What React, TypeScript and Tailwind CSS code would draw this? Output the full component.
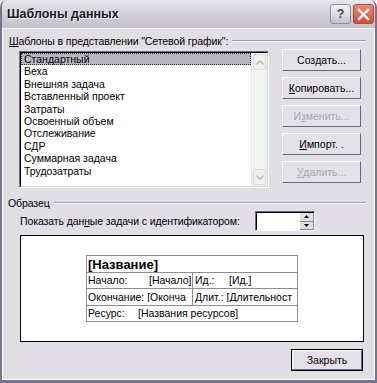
import React from "react";

const font = { fontFamily: '"Liberation Sans", Arial, sans-serif' };

function Btn({ children, disabled, def }: { children: React.ReactNode; disabled?: boolean; def?: boolean }) {
  return (
    <div
      className={
        "h-[22px] flex items-center justify-center text-[10.5px] leading-none " +
        (def ? "border border-black " : "") +
        (disabled ? "text-[#a7a5b0]" : "text-black")
      }
    >
      <div className="w-full h-full flex items-center justify-center border-t border-l border-t-white border-l-white border-r border-b border-r-[#6b6878] border-b-[#6b6878] bg-[#e4e1e8]">
        {children}
      </div>
    </div>
  );
}

function U({ children }: { children: React.ReactNode }) {
  return <span className="underline underline-offset-[1px]">{children}</span>;
}

function GroupLabel({ children }: { children: React.ReactNode }) {
  return (
    <div className="flex items-center h-[14px]">
      <span className="text-[10.5px] leading-none text-black whitespace-nowrap tracking-[-0.1px]">{children}</span>
      <div className="flex-1 ml-[4px] mr-[8px] flex flex-col">
        <div className="h-px bg-[#a09cb0]" />
        <div className="h-px bg-white" />
      </div>
    </div>
  );
}

export default function App() {
  const items = [
    "Стандартный",
    "Веха",
    "Внешняя задача",
    "Вставленный проект",
    "Затраты",
    "Освоенный объем",
    "Отслеживание",
    "СДР",
    "Суммарная задача",
    "Трудозатраты",
  ];
  return (
    <div className="w-[377px] h-[383px] bg-white" style={font}>
      <div className="w-[377px] h-[383px] flex flex-col rounded-t-[7px] border-l-2 border-r-2 border-b-[3px] border-[#77748c] bg-[#cfccd8] overflow-hidden">
        {/* Title bar */}
        <div className="h-[28px] flex items-center bg-gradient-to-b from-[#e9e7ef] via-[#d2cfdb] to-[#c3c0cc] pl-[5px] pr-[1px] shrink-0">
          <span className="text-[12.5px] font-bold text-[#1b1a22]" style={{ textShadow: "1px 1px 0 #f4f3f8" }}>
            Шаблоны данных
          </span>
          <div className="flex-1" />
          <div className="w-[21px] h-[20px] rounded-[3px] border border-[#8f8ca0] bg-gradient-to-b from-[#f4f3f8] to-[#c6c3d0] flex items-center justify-center text-[13px] font-bold text-[#4a4858] mr-[2px]">
            ?
          </div>
          <div className="w-[21px] h-[20px] rounded-[3px] border border-[#b04a3c] bg-gradient-to-b from-[#ec8a78] to-[#d24a34] flex items-center justify-center">
            <svg width="13" height="13" viewBox="0 0 13 13">
              <path d="M2 2 L11 11 M11 2 L2 11" stroke="white" strokeWidth="2.4" strokeLinecap="square" />
            </svg>
          </div>
        </div>
        {/* Body */}
        <div className="flex-1 flex flex-col border-l border-r border-b border-white border-t border-t-[#f2f0f6] bg-[#e2dee6] pt-[5px] pl-[6px]">
          <GroupLabel>
            <U>Ш</U>аблоны в представлении "Сетевой график":
          </GroupLabel>
          <div className="flex mt-[3px] ml-[10px]">
            <div className="w-[250px] h-[137px] border border-t-[#6e6b7c] border-l-[#6e6b7c] border-b-white border-r-white">
              <div className="w-full h-full border border-t-black border-l-black border-b-[#d6d3dc] border-r-[#d6d3dc] bg-white flex">
                <div className="flex-1 flex flex-col text-[10.5px] leading-[12.4px] text-black">
                  {items.map((it, i) => (
                    <div
                      key={it}
                      className={
                        "pl-[3px] h-[12.4px] whitespace-nowrap " +
                        (i === 0 ? "bg-[#b9b6c3] outline-1 outline-dotted outline-[#333] -outline-offset-1" : "")
                      }
                    >
                      {it}
                    </div>
                  ))}
                </div>
                <div className="w-[16px] bg-[#f1f5f0] flex flex-col justify-between border-l border-[#e4e8e2]">
                  <div className="h-[16px] m-[1px] border border-[#d7dad6] bg-[#eef1ee] rounded-[2px] flex items-center justify-center">
                    <svg width="8" height="5" viewBox="0 0 8 5">
                      <path d="M0.5 4.5 L4 1 L7.5 4.5" stroke="#b8bcc8" strokeWidth="1.6" fill="none" />
                    </svg>
                  </div>
                  <div className="h-[16px] m-[1px] border border-[#d7dad6] bg-[#eef1ee] rounded-[2px] flex items-center justify-center">
                    <svg width="8" height="5" viewBox="0 0 8 5">
                      <path d="M0.5 0.5 L4 4 L7.5 0.5" stroke="#b8bcc8" strokeWidth="1.6" fill="none" />
                    </svg>
                  </div>
                </div>
              </div>
            </div>
            <div className="w-[79px] ml-[13px] -mt-[2px] flex flex-col gap-[6px]">
              <Btn>
                Соз<U>д</U>ать...
              </Btn>
              <Btn>
                <U>К</U>опировать...
              </Btn>
              <Btn disabled>
                И<U>з</U>менить...
              </Btn>
              <Btn>
                <U>И</U>мпорт. .
              </Btn>
              <Btn disabled>
                <U>У</U>далить...
              </Btn>
            </div>
          </div>
          <div className="mt-[8px] -ml-[1px]">
            <GroupLabel>Образец</GroupLabel>
          </div>
          <div className="flex items-center mt-[1px] ml-[11px] h-[20px]">
            <span className="w-[235px] shrink-0 text-[10.5px] leading-none text-black whitespace-nowrap tracking-[-0.1px]">
              Показать дан<U>н</U>ые задачи с идентификатором:
            </span>
            <div className="w-[60px] h-[20px] flex border border-t-[#6e6b7c] border-l-[#6e6b7c] border-b-white border-r-white">
              <div className="flex-1 bg-white border-t border-l border-black" />
              <div className="w-[15px] flex flex-col bg-[#e2dee6] border-t border-black">
                <div className="flex-1 flex items-center justify-center border-b border-r border-[#8a879a] border-l border-l-white">
                  <svg width="5" height="3" viewBox="0 0 5 3"><path d="M2.5 0 L5 3 L0 3 Z" fill="#000" /></svg>
                </div>
                <div className="flex-1 flex items-center justify-center border-r border-b border-[#8a879a] border-l border-l-white">
                  <svg width="5" height="3" viewBox="0 0 5 3"><path d="M0 0 L5 0 L2.5 3 Z" fill="#000" /></svg>
                </div>
              </div>
            </div>
          </div>
          <div className="ml-[11px] mt-[4px] w-[344px] h-[107px] bg-white border border-black flex items-center justify-center">
            <div className="w-[212px] border border-[#8e8e8e] text-[10.5px] leading-none text-black flex flex-col">
              <div className="h-[17px] flex items-center pl-[1px] border-b border-[#8e8e8e] text-[13px] font-bold">[Название]</div>
              <div className="h-[16px] flex border-b border-[#8e8e8e]">
                <div className="w-[106px] flex items-center border-r border-[#8e8e8e] overflow-hidden whitespace-nowrap pl-[1px]">
                  <span className="w-[61px] shrink-0">Начало:</span>
                  <span className="min-w-0 overflow-hidden">[Начало]</span>
                </div>
                <div className="flex-1 flex items-center overflow-hidden whitespace-nowrap pl-[2px]">
                  <span className="w-[34px] shrink-0">Ид.:</span>
                  <span>[Ид.]</span>
                </div>
              </div>
              <div className="h-[17px] flex border-b border-[#8e8e8e]">
                <div className="w-[106px] flex items-center border-r border-[#8e8e8e] overflow-hidden whitespace-nowrap pl-[1px]">
                  <span className="shrink-0">Окончание:&nbsp;</span>
                  <span className="min-w-0 overflow-hidden">[Оконча</span>
                </div>
                <div className="flex-1 flex items-center overflow-hidden whitespace-nowrap pl-[2px]">
                  <span className="shrink-0">Длит.:&nbsp;</span>
                  <span className="min-w-0 overflow-hidden">[Длительност</span>
                </div>
              </div>
              <div className="h-[15px] flex items-center pl-[1px] whitespace-nowrap">
                <span className="w-[50px] shrink-0">Ресурс:</span>
                <span>[Названия ресурсов]</span>
              </div>
            </div>
          </div>
          <div className="flex justify-end mt-[7px] mr-[11px]">
            <div className="w-[72px]">
              <Btn def>Закрыть</Btn>
            </div>
          </div>
        </div>
      </div>
    </div>
  );
}
